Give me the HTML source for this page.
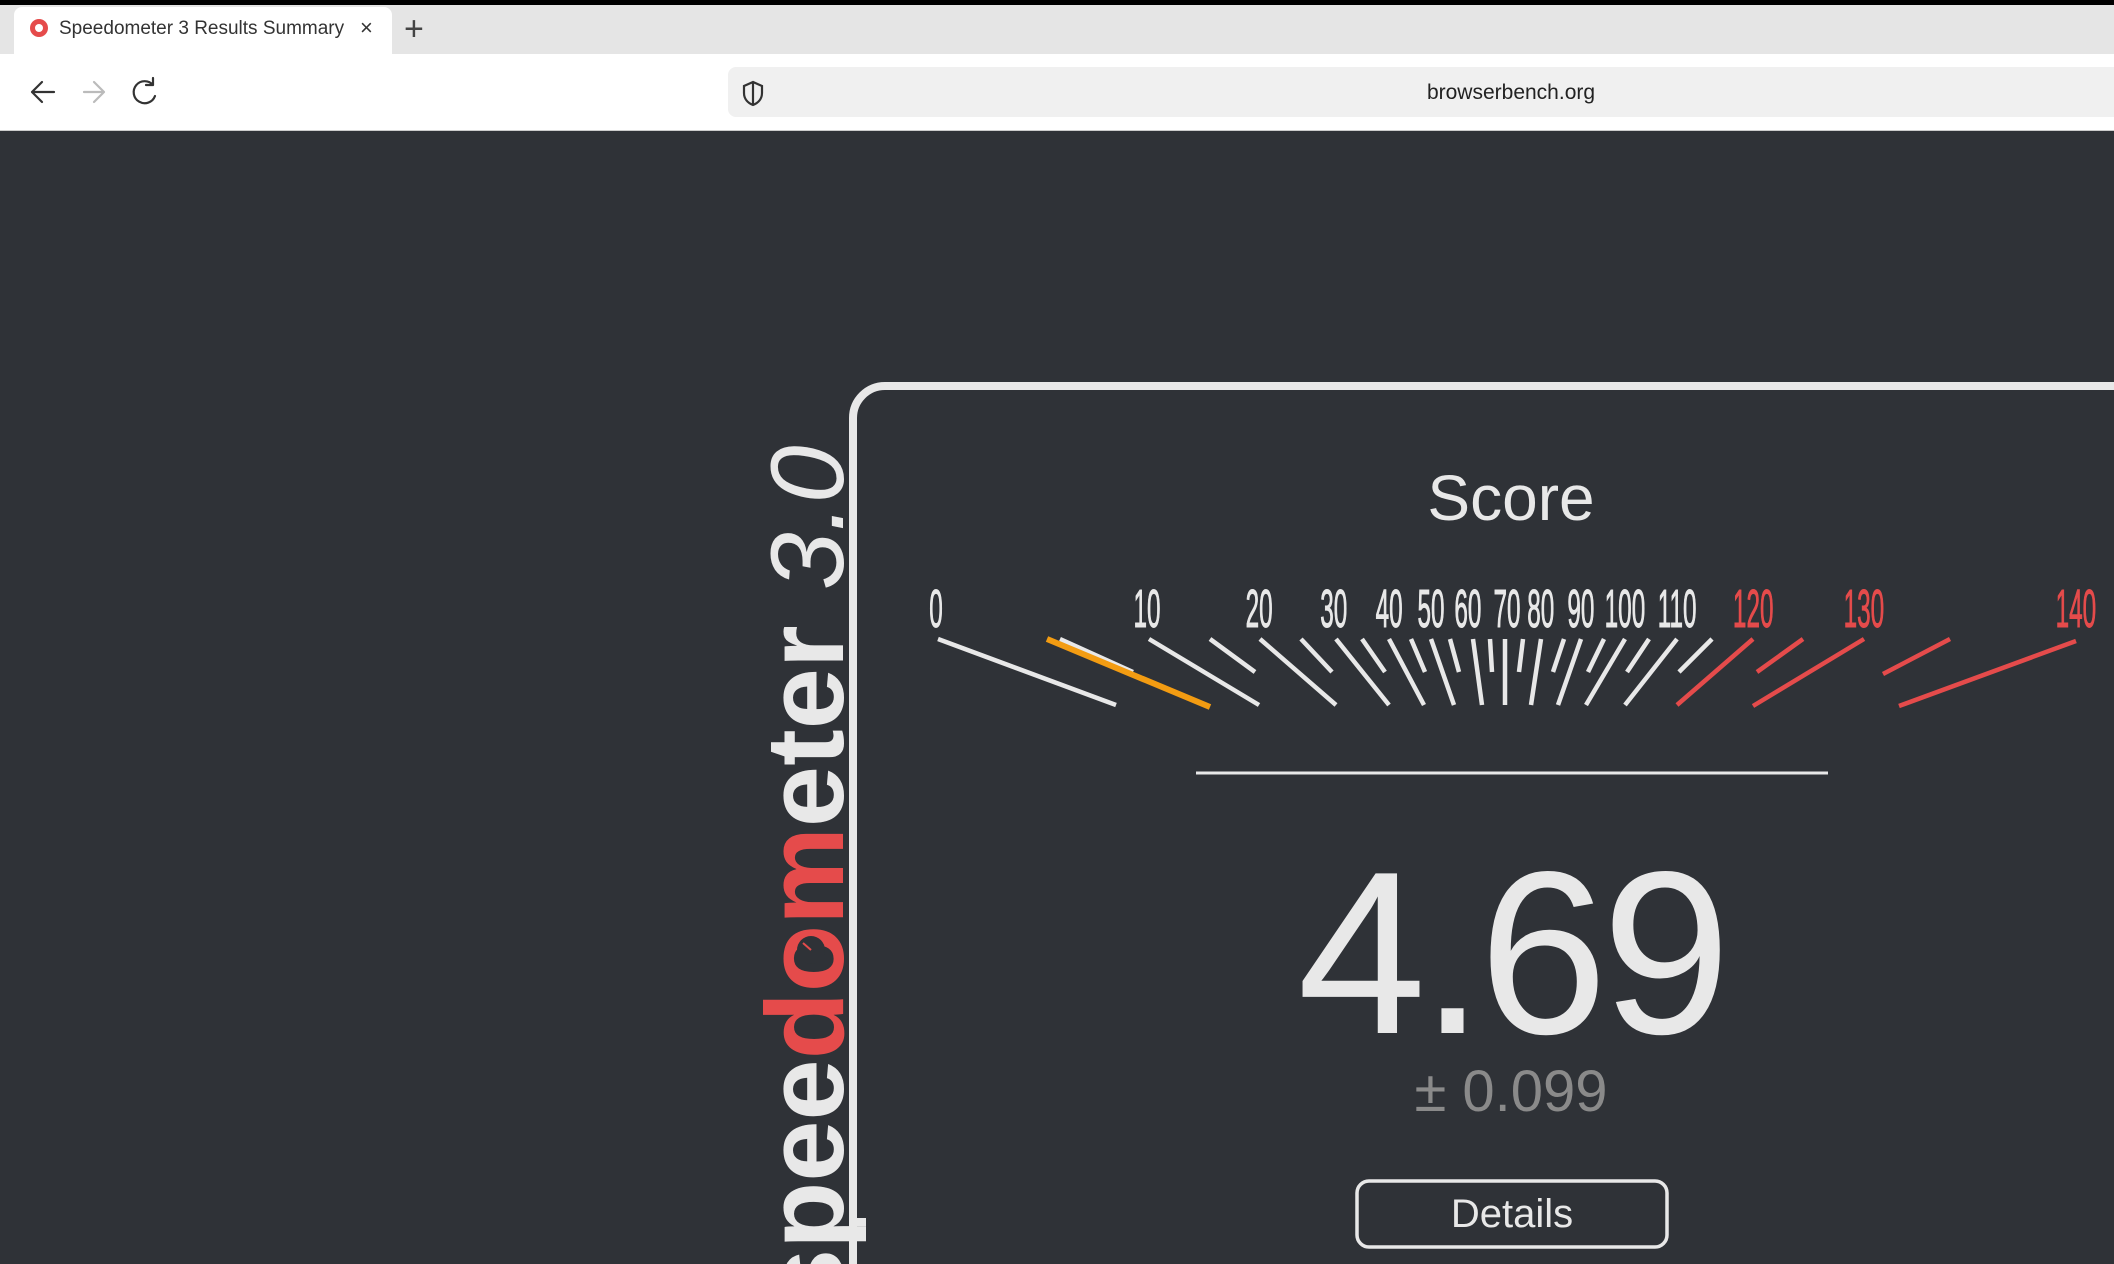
<!DOCTYPE html>
<html><head><meta charset="utf-8"><style>
html,body{margin:0;padding:0;width:2114px;height:1264px;overflow:hidden;background:#2f3237;font-family:"Liberation Sans",sans-serif}
.abs{position:absolute}
</style></head><body>
<div class="abs" style="left:0;top:0;width:2114px;height:5px;background:#000"></div>
<div class="abs" style="left:0;top:5px;width:2114px;height:49px;background:#e5e5e5"></div>
<div class="abs" style="left:14px;top:7px;width:378px;height:47px;background:#fff;border-radius:8px 8px 0 0"></div>
<div class="abs" style="left:30px;top:19px;width:18px;height:18px;border-radius:50%;background:#e54b4b"></div>
<div class="abs" style="left:35px;top:24px;width:8px;height:8px;border-radius:50%;background:#fff"></div>
<div class="abs" style="left:59px;top:18px;font-size:19px;color:#333">Speedometer 3 Results Summary</div>
<div class="abs" style="left:360px;top:15px;font-size:22px;color:#333">×</div>
<div class="abs" style="left:404px;top:10px;font-size:34px;color:#444;font-weight:300">+</div>
<div class="abs" style="left:0;top:54px;width:2114px;height:76px;background:#fff;border-bottom:1px solid #ccc"></div>
<svg class="abs" style="left:0;top:54px" width="200" height="76">
<g fill="none" stroke-width="2.2" stroke-linecap="round" stroke-linejoin="round">
<path d="M54 38H32M42 28L32 38L42 48" stroke="#333"/>
<path d="M84 38H104M94 28L104 38L94 48" stroke="#bbb"/>
<path d="M153 31A11 11 0 1 0 155 42M153 24V31H146" stroke="#333"/>
</g></svg>
<div class="abs" style="left:728px;top:67px;width:1400px;height:50px;background:#f0f0f0;border-radius:8px"></div>
<svg class="abs" style="left:738px;top:78px" width="30" height="30"><path d="M15 4L6 8V15C6 21 10 25 15 27C20 25 24 21 24 15V8Z M15 4V27" fill="none" stroke="#333" stroke-width="2.2"/></svg>
<div class="abs" style="left:1311px;top:81px;width:400px;text-align:center;font-size:21px;color:#222">browserbench.org</div>

<svg class="abs" style="left:0;top:0" width="2114" height="1264">
<path d="M853 1264V418A32 32 0 0 1 885 386H2120" fill="none" stroke="#e8e8e8" stroke-width="8"/>
<line x1="853" y1="1222" x2="866" y2="1222" stroke="#e8e8e8" stroke-width="8"/>
<g font-family="Liberation Sans,sans-serif" font-size="110" font-weight="bold">
<text transform="translate(843,1310) rotate(-90)" fill="#e8e8e8">spee<tspan fill="#e54b4b">dom</tspan>eter</text>
</g>
<circle cx="811" cy="950" r="14" fill="#2f3237"/>
<line x1="811" y1="950" x2="803" y2="943" stroke="#e54b4b" stroke-width="2"/>
<text transform="translate(843,590) rotate(-90)" fill="#e8e8e8" font-family="Liberation Sans,sans-serif" font-style="italic" font-size="104">3.0</text>
<text x="1511" y="520" text-anchor="middle" font-family="Liberation Sans,sans-serif" font-size="64" fill="#e8e8e8">Score</text>
<g stroke="#e8e8e8" stroke-width="4.5" stroke-linecap="butt">
<line x1="938" y1="639" x2="1116" y2="705"/>
<line x1="1060" y1="639" x2="1133" y2="672"/>
<line x1="1149" y1="639" x2="1259" y2="705"/>
<line x1="1210" y1="639" x2="1255" y2="672"/>
<line x1="1260" y1="639" x2="1336" y2="705"/>
<line x1="1301" y1="639" x2="1332" y2="672"/>
<line x1="1336" y1="639" x2="1389" y2="705"/>
<line x1="1362" y1="639" x2="1385" y2="672"/>
<line x1="1389" y1="639" x2="1424" y2="705"/>
<line x1="1411" y1="639" x2="1425" y2="672"/>
<line x1="1431" y1="639" x2="1454" y2="705"/>
<line x1="1450" y1="639" x2="1459" y2="672"/>
<line x1="1473" y1="639" x2="1482" y2="705"/>
<line x1="1490" y1="639" x2="1492" y2="672"/>
<line x1="1505" y1="639" x2="1505" y2="705"/>
<line x1="1523" y1="639" x2="1519" y2="672"/>
<line x1="1541" y1="639" x2="1531" y2="705"/>
<line x1="1564" y1="639" x2="1553" y2="672"/>
<line x1="1581" y1="639" x2="1558" y2="705"/>
<line x1="1604" y1="639" x2="1588" y2="672"/>
<line x1="1625" y1="639" x2="1586" y2="705"/>
<line x1="1649" y1="639" x2="1627" y2="672"/>
<line x1="1677" y1="639" x2="1625" y2="705"/>
<line x1="1712" y1="639" x2="1679" y2="672"/>
</g>
<line x1="1047" y1="639" x2="1210" y2="707" stroke="#f39c12" stroke-width="6"/>
<g stroke="#e54b4b" stroke-width="4.5">
<line x1="1753" y1="639" x2="1677" y2="705"/>
<line x1="1803" y1="639" x2="1757" y2="672"/>
<line x1="1864" y1="639" x2="1753" y2="706"/>
<line x1="1950" y1="639" x2="1883" y2="674"/>
<line x1="2076" y1="641" x2="1899" y2="706"/>
</g>
<g font-family="Liberation Sans,sans-serif" font-size="54" text-anchor="middle" transform="scale(0.45,1)" fill="#e8e8e8" stroke="#e8e8e8" stroke-width="1">
<text x="2080" y="627">0</text><text x="2549" y="627">10</text><text x="2798" y="627">20</text>
<text x="2964" y="627">30</text><text x="3087" y="627">40</text><text x="3180" y="627">50</text>
<text x="3262" y="627">60</text><text x="3349" y="627">70</text><text x="3424" y="627">80</text>
<text x="3513" y="627">90</text><text x="3611" y="627">100</text><text x="3727" y="627">110</text>
<g fill="#e54b4b" stroke="#e54b4b"><text x="3896" y="627">120</text><text x="4142" y="627">130</text><text x="4613" y="627">140</text></g>
</g>
<line x1="1196" y1="773" x2="1828" y2="773" stroke="#e8e8e8" stroke-width="3"/>
<text x="1511" y="1033" text-anchor="middle" font-family="Liberation Sans,sans-serif" font-size="232" fill="#e8e8e8" letter-spacing="-6">4.69</text>
<text x="1511" y="1111" text-anchor="middle" font-family="Liberation Sans,sans-serif" font-size="58" fill="#8a8a8a">± 0.099</text>
<rect x="1357" y="1181" width="310" height="66" rx="12" fill="none" stroke="#e8e8e8" stroke-width="3.5"/>
<text x="1512" y="1227" text-anchor="middle" font-family="Liberation Sans,sans-serif" font-size="40" fill="#e8e8e8">Details</text>
</svg>
</body></html>
